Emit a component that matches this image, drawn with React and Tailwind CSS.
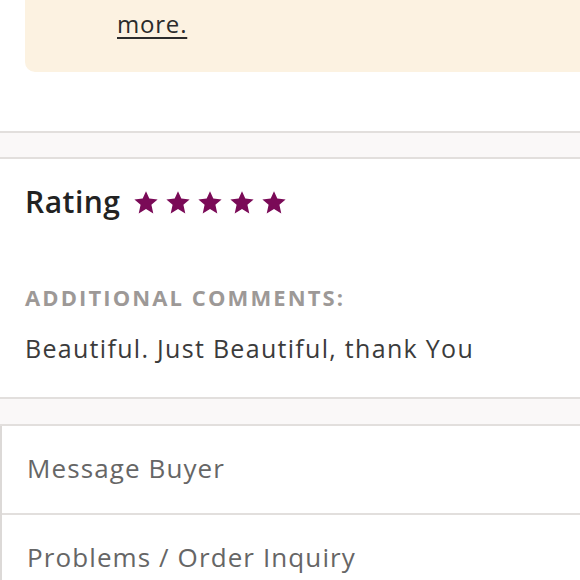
const rows = ['Message Buyer', 'Problems / Order Inquiry'];

function StarIcon() {
  return (
    <svg width="24" height="23" viewBox="0 0 24 23" className="text-[#7a0a57]">
      <polygon
        fill="currentColor"
        points="12,0.3 15.3,7.6 23.6,8.4 17.4,13.8 19.3,22.4 12,18 4.7,22.4 6.6,13.8 0.4,8.4 8.7,7.6"
      />
    </svg>
  );
}

export default function App() {
  return (
    <div className="w-[580px] h-[580px] overflow-hidden bg-white font-['Open_Sans',sans-serif]">
      <div className="pl-[25px]">
        <div className="bg-[#fcf2e1] rounded-bl-[10px] mt-[-31px] pl-[92px] pr-4 pt-[4px] pb-[31px] text-[24px] leading-[34px] text-[#2b2b2b] whitespace-nowrap tracking-[0.8px]">
          <div className="mt-[-5px] mb-[5px]">Additional taxes may apply. Learn</div>
          <div><span className="underline underline-offset-[4px]">more.</span></div>
        </div>
      </div>
      <div className="h-[59px]" />
      <div className="h-[28px] bg-[#faf8f8] border-y-2 border-[#e2dfdd]" />
      <div className="px-[25px] pt-[20px] h-[238px]">
        <div className="flex items-center gap-[14px]">
          <h3 className="text-[30px] font-semibold text-[#222] tracking-[0.5px]">Rating</h3>
          <div className="flex gap-[8px] mt-[2px]">
            {[0, 1, 2, 3, 4].map((i) => (
              <StarIcon key={i} />
            ))}
          </div>
        </div>
        <p className="mt-[57px] text-[22px] font-bold tracking-[2.1px] uppercase text-[#9d9997]">Additional comments:</p>
        <p className="mt-[16px] text-[25px] text-[#3b3b3b] tracking-[1.3px]">Beautiful. Just Beautiful, thank You</p>
      </div>
      <div className="h-[29px] bg-[#faf8f8] border-y-2 border-[#e2dfdd]" />
      <div className="border-l-2 border-[#dcd9d7]">
        {rows.map((r) => (
          <div key={r} className="h-[89px] flex items-center pl-[25px] pb-[2px] border-b-2 border-[#e2dfdd] text-[26px] text-[#666] tracking-[1.1px]">
            {r}
          </div>
        ))}
      </div>
    </div>
  );
}
